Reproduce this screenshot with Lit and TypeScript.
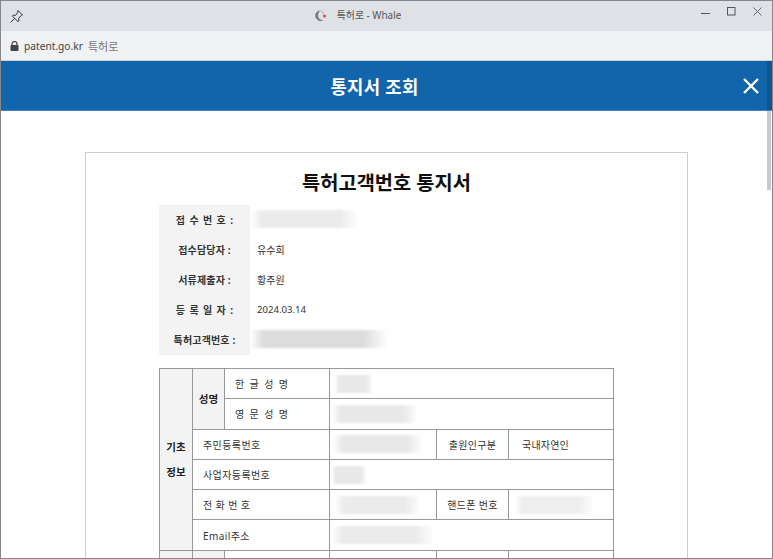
import { LitElement, html, css } from "lit";
import { customElement } from "lit/decorators.js";

const blur = (w: number, h: number, shade = "#d9d9d9", ml = 0) =>
  html`<span class="blur" style="width:${w}px;height:${h}px;margin-left:${ml}px;--s:${shade}"></span>`;

@customElement("app-root")
export class AppRoot extends LitElement {
  static styles = css`
    :host { display: block; width: 773px; height: 559px; overflow: hidden; position: relative;
      font-family: "Noto Sans", "Noto Sans CJK KR", sans-serif; color: #222; background: #fff; }
    * { box-sizing: border-box; }
    .win { height: 559px; display: flex; flex-direction: column; border: 1px solid #85878a; overflow: hidden; }
    .title { height: 30px; flex: none; background: #dee1e6; display: flex; align-items: center; padding: 0 0 0 8px; }
    .pin { width: 15px; height: 15px; }
    .tcenter { flex: 1; display: flex; justify-content: center; align-items: center; gap: 10px; font-size: 9.9px; color: #555; padding: 0 10px 2px 0; }
    .ctrls { display: flex; align-items: center; gap: 17px; padding-right: 10px; margin-bottom: 10px; }
    .ctrls svg { display: block; }
    .url { height: 30px; flex: none; background: #f0f1f3; display: flex; align-items: center; padding-left: 9px; gap: 5px; font-size: 10.2px; color: #444; border-bottom: 1px solid #cdd0d4; }
    .url .k { color: #777; font-size: 11px; }
    .head { height: 50px; flex: none; background: #1264ab; color: #fff; display: flex; align-items: center; justify-content: center; font-size: 17.8px; font-weight: 700; position: relative; letter-spacing: .3px; border-bottom: 1px solid #3f82bd; padding-right: 24px; }
    .close { position: absolute; left: 741px; top: 16px; width: 18px; height: 18px; }
    .sbtop { position: absolute; right: 0; top: 0; width: 5px; height: 49px; background: #0f5592; }
    .body { flex: 1; padding: 41px 0 0 84px; overflow: hidden; position: relative; }
    .sb { position: absolute; right: 1px; top: 0; width: 4px; height: 79px; background: #c9c9c9; }
    .doc { width: 603px; height: 600px; border: 1px solid #ccc; padding: 10px 73px 0; }
    h1 { margin: 0; text-align: center; font-size: 19.8px; font-weight: 700; line-height: 40px; height: 42px; color: #111; }
    .info { display: grid; grid-template-columns: 91px 1fr; grid-auto-rows: 30px; width: 300px; margin-bottom: 13px; }
    .lab { background: #f3f3f3; display: flex; align-items: center; justify-content: center; font-size: 10px; font-weight: 700; color: #333; letter-spacing: .15px; padding-bottom: 2px; }
    .lab.w { word-spacing: 1.5px; }
    .val { display: flex; align-items: center; padding: 0 0 2px 7px; font-size: 10px; color: #333; white-space: nowrap; }
    .val.d { font-size: 9.6px; padding-bottom: 1px; }
    .blur { display: inline-block; flex: none; background: linear-gradient(90deg, transparent, var(--s) 10%, var(--s) 82%, transparent); filter: blur(1px); }
    table { border-collapse: collapse; table-layout: fixed; width: 454px; font-size: 10px; color: #333; }
    td { border: 1px solid #999; height: 30.3px; padding: 0; overflow: hidden; white-space: nowrap; }
    .g { background: #f3f3f3; font-weight: 700; text-align: center; font-size: 10.5px; line-height: 25px; color: #222; padding-top: 2px; }
    .c { text-align: center; letter-spacing: .3px; }
    .l { padding-left: 10px; letter-spacing: .4px; }
    .n { padding-left: 10px; word-spacing: 2px; letter-spacing: .4px; }
    .l2 { padding-left: 13px; letter-spacing: .2px; }
    .v { padding-left: 6px; }
    td .blur { vertical-align: middle; }
  `;

  render() {
    return html`<div class="win">
      <div class="title">
        <svg class="pin" viewBox="0 0 15 15" fill="none" stroke="#333" stroke-width="1"><path d="M9 1.500l4.500 4.500-1.200.4-2.600 3 .2 2.400-1 .7L3.400 7.200l.8-1 2.300.2 2.200-3z"/><path d="M5.500 9.500L1.500 13.500"/></svg>
        <div class="tcenter">
          <svg width="13" height="13" viewBox="0 0 13 13"><path d="M6.500 1.500a5.200 5.200 0 1 0 3 9.400c-2.300.4-5.400-.9-5.400-4.400 0-2.300 1-3.900 2.400-5z" fill="#777b80"/><path d="M6.500 1.500c1.500.6 2.500 2 3 3.800" fill="none" stroke="#a8abaf" stroke-width="1"/><circle cx="10.500" cy="7" r="1.500" fill="#e8412c"/></svg>
          <span>특허로 - Whale</span>
        </div>
        <div class="ctrls">
          <svg width="9" height="10" viewBox="0 0 9 10"><path d="M0 7.500h9" stroke="#555" stroke-width="1"/></svg>
          <svg width="9" height="9" viewBox="0 0 9 9"><rect x=".5" y=".5" width="7.500" height="7.500" fill="none" stroke="#555"/></svg>
          <svg width="9" height="9" viewBox="0 0 9 9"><path d="M.5.5l8 8M8.500.5l-8 8" stroke="#666"/></svg>
        </div>
      </div>
      <div class="url">
        <svg width="9" height="10" viewBox="0 0 9 10"><path d="M2 4.500V3a2.500 2.500 0 0 1 5 0v1.500" fill="none" stroke="#444" stroke-width="1.200"/><rect x=".5" y="4" width="8" height="6" rx="1" fill="#444"/></svg>
        <span>patent.go.kr</span><span class="k">특허로</span>
      </div>
      <div class="head">통지서 조회
        <svg class="close" viewBox="0 0 18 18"><path d="M2 2l14 14M16 2L2 16" stroke="#fff" stroke-width="2.400"/></svg>
        <div class="sbtop"></div>
      </div>
      <div class="body">
        <div class="sb"></div>
        <div class="doc">
          <h1>특허고객번호 통지서</h1>
          <div class="info">
            <div class="lab w">접 수 번 호 :</div><div class="val">${blur(108, 18, "#ebebeb", -6)}</div>
            <div class="lab">접수담당자 :</div><div class="val">유수희</div>
            <div class="lab">서류제출자 :</div><div class="val">황주원</div>
            <div class="lab w">등 록 일 자 :</div><div class="val d">2024.03.14</div>
            <div class="lab">특허고객번호 :</div><div class="val">${blur(138, 18, "#dcdcdc", -7)}</div>
          </div>
          <table>
            <colgroup><col style="width:33px"/><col style="width:32px"/><col style="width:105px"/><col style="width:107px"/><col style="width:72px"/><col style="width:105px"/></colgroup>
            <tr><td class="g" rowspan="6">기초<br/>정보</td><td class="g" rowspan="2">성명</td><td class="n">한 글 성 명</td><td colspan="3" class="v">${blur(38, 18, "#e8e8e8", -1)}</td></tr>
            <tr><td class="n">영 문 성 명</td><td colspan="3" class="v">${blur(86, 18, "#e8e8e8", -4)}</td></tr>
            <tr><td colspan="2" class="l">주민등록번호</td><td class="v">${blur(90, 18, "#e8e8e8", -3)}</td><td class="c">출원인구분</td><td class="l2">국내자연인</td></tr>
            <tr><td colspan="2" class="l">사업자등록번호</td><td colspan="3" class="v">${blur(35, 18, "#e8e8e8", -4)}</td></tr>
            <tr><td colspan="2" class="l">전 화 번 호</td><td class="v">${blur(86, 18, "#ebebeb", -1)}</td><td class="c">핸드폰 번호</td><td class="v">${blur(78, 18, "#eeeeee")}</td></tr>
            <tr><td colspan="2" class="l">Email주소</td><td colspan="3" class="v">${blur(102, 18, "#ebebeb", -4)}</td></tr>
            <tr><td class="g"></td><td class="g"></td><td></td><td></td><td></td><td></td></tr>
          </table>
        </div>
      </div>
    </div>`;
  }
}
